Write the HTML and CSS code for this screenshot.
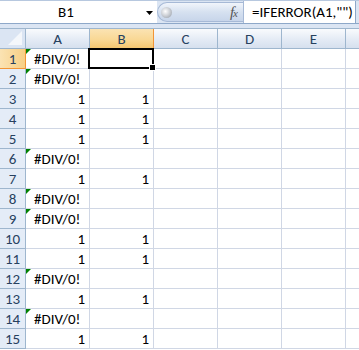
FILE: index.html
```html
<!DOCTYPE html>
<html>
<head>
<meta charset="utf-8">
<link rel="stylesheet" href="styles.css">
</head>
<body>
<div class="app">
  <div class="fbar">
    <div class="namebox">
      <span class="name">B1</span>
      <svg class="arrow" width="7" height="4" viewBox="0 0 7 4"><path d="M0 0H7L3.5 4Z" fill="#000"/></svg>
    </div>
    <div class="pill">
      <span class="ball"></span>
      <span class="fx">f<span class="x">x</span></span>
    </div>
    <div class="formula">=IFERROR(A1,"")</div>
    <div class="fend"></div>
  </div>
  <div class="strip"></div>
  <div class="sheet">
    <div class="corner"><span class="tri"></span></div>
    <div class="ch">A</div>
    <div class="ch sel">B</div>
    <div class="ch">C</div>
    <div class="ch">D</div>
    <div class="ch">E</div>
    <div class="ch last"></div>

    <div class="rh sel">1</div><div class="c err">#DIV/0!</div><div class="c"></div><div class="c"></div><div class="c"></div><div class="c"></div><div class="c last"></div>
    <div class="rh">2</div><div class="c err">#DIV/0!</div><div class="c"></div><div class="c"></div><div class="c"></div><div class="c"></div><div class="c last"></div>
    <div class="rh">3</div><div class="c num">1</div><div class="c num">1</div><div class="c"></div><div class="c"></div><div class="c"></div><div class="c last"></div>
    <div class="rh">4</div><div class="c num">1</div><div class="c num">1</div><div class="c"></div><div class="c"></div><div class="c"></div><div class="c last"></div>
    <div class="rh">5</div><div class="c num">1</div><div class="c num">1</div><div class="c"></div><div class="c"></div><div class="c"></div><div class="c last"></div>
    <div class="rh">6</div><div class="c err">#DIV/0!</div><div class="c"></div><div class="c"></div><div class="c"></div><div class="c"></div><div class="c last"></div>
    <div class="rh">7</div><div class="c num">1</div><div class="c num">1</div><div class="c"></div><div class="c"></div><div class="c"></div><div class="c last"></div>
    <div class="rh">8</div><div class="c err">#DIV/0!</div><div class="c"></div><div class="c"></div><div class="c"></div><div class="c"></div><div class="c last"></div>
    <div class="rh">9</div><div class="c err">#DIV/0!</div><div class="c"></div><div class="c"></div><div class="c"></div><div class="c"></div><div class="c last"></div>
    <div class="rh">10</div><div class="c num">1</div><div class="c num">1</div><div class="c"></div><div class="c"></div><div class="c"></div><div class="c last"></div>
    <div class="rh">11</div><div class="c num">1</div><div class="c num">1</div><div class="c"></div><div class="c"></div><div class="c"></div><div class="c last"></div>
    <div class="rh">12</div><div class="c err">#DIV/0!</div><div class="c"></div><div class="c"></div><div class="c"></div><div class="c"></div><div class="c last"></div>
    <div class="rh">13</div><div class="c num">1</div><div class="c num">1</div><div class="c"></div><div class="c"></div><div class="c"></div><div class="c last"></div>
    <div class="rh">14</div><div class="c err">#DIV/0!</div><div class="c"></div><div class="c"></div><div class="c"></div><div class="c"></div><div class="c last"></div>
    <div class="rh">15</div><div class="c num">1</div><div class="c num">1</div><div class="c"></div><div class="c"></div><div class="c"></div><div class="c last"></div>

    <div class="selection"><span class="handle"></span></div>
  </div>
</div>
</body>
</html>
```

FILE: styles.css
```css
html, body {
  margin: 0;
  padding: 0;
  background: #ffffff;
  overflow: hidden;
}
.app {
  width: 359px;
  height: 350px;
  font-family: Carlito, Lato, "Liberation Sans", sans-serif;
  font-size: 15px;
  color: #000;
  overflow: hidden;
}
.fbar {
  display: flex;
  height: 24px;
  box-sizing: border-box;
  border-top: 1px solid #b7c8df;
  border-bottom: 1px solid #8ea8c9;
  background: #dbe5f3;
}
.namebox {
  width: 157px;
  background: #fff;
  display: flex;
  align-items: center;
  position: relative;
}
.name {
  flex: 1;
  text-align: center;
  font-size: 15px;
  padding-right: 14px;
  color: #000;
}
.arrow {
  margin-right: 4px;
  margin-top: 2px;
}
.pill {
  width: 86px;
  margin-top: 1px;
  margin-bottom: 1px;
  box-sizing: border-box;
  border: 1px solid #a6b9d6;
  border-right: none;
  border-radius: 10px 0 0 10px;
  background: linear-gradient(#f1f5fb, #d6e1f0 50%, #c7d5ea);
  display: flex;
  align-items: center;
  justify-content: space-between;
  padding-left: 3px;
  padding-right: 6px;
}
.ball {
  width: 11px;
  height: 11px;
  border-radius: 50%;
  background: radial-gradient(circle at 40% 40%, #ffffff, #c9cdd3 50%, #8e959f);
}
.fx {
  font-family: "Liberation Serif", serif;
  font-style: italic;
  font-size: 15px;
  color: #555;
  letter-spacing: -1px;
}
.fx .x {
  font-size: 11px;
}
.formula {
  width: 112px;
  background: #fff;
  display: flex;
  align-items: center;
  padding-left: 8px;
  box-sizing: border-box;
  border-left: 1px solid #a6b9d6;
  font-size: 15px;
  white-space: nowrap;
  overflow: hidden;
}
.fend {
  flex: 1;
  border-left: 1px solid #8ea8c9;
  background: #dbe5f3;
}
.strip {
  height: 4px;
  background: #dbe5f3;
  border-bottom: 1px solid #9eb6ce;
}
.sheet {
  position: relative;
  display: grid;
  grid-template-columns: 26px repeat(5, 64px) 1fr;
  grid-template-rows: 20px repeat(15, 20px);
}
.corner {
  background: #dbe5f3;
  border-right: 1px solid #9eb6ce;
  border-bottom: 1px solid #9eb6ce;
  position: relative;
  box-sizing: border-box;
}
.tri {
  position: absolute;
  right: 3px;
  bottom: 3px;
  width: 0;
  height: 0;
  border-left: 14px solid transparent;
  border-bottom: 14px solid #f4f7fb;
}
.ch {
  box-sizing: border-box;
  border-right: 1px solid #9eb6ce;
  border-bottom: 1px solid #9eb6ce;
  background: linear-gradient(#f9fbfd, #e4ebf5 55%, #d6e0ee);
  color: #27415f;
  display: flex;
  align-items: center;
  justify-content: center;
  font-size: 15px;
}
.ch.sel {
  background: linear-gradient(#fbe3b3, #f9d895 55%, #f5c670);
  border-right-color: #f29536;
  border-bottom-color: #f29536;
}
.ch.last {
  border-right: none;
}
.rh {
  box-sizing: border-box;
  border-right: 1px solid #9eb6ce;
  border-bottom: 1px solid #9eb6ce;
  background: #e4ecf7;
  color: #27415f;
  display: flex;
  align-items: center;
  justify-content: center;
  font-size: 15px;
}
.rh.sel {
  background: linear-gradient(90deg, #fbe3b3, #f7cf85);
  border-bottom-color: #f29536;
  border-right-color: #f29536;
}
.c {
  box-sizing: border-box;
  border-right: 1px solid #d0d7e5;
  border-bottom: 1px solid #d0d7e5;
  display: flex;
  align-items: center;
  padding: 0 4px;
  white-space: nowrap;
  position: relative;
  font-size: 15px;
}
.c.last {
  border-right: none;
}
.c.num {
  justify-content: flex-end;
}
.c.err {
  padding-left: 8px;
}
.c.err::before {
  content: "";
  position: absolute;
  left: 0;
  top: 0;
  border-top: 5px solid #008000;
  border-right: 5px solid transparent;
}
.selection {
  position: absolute;
  left: 88px;
  top: 19px;
  width: 66px;
  height: 21px;
  box-sizing: border-box;
  border: 2px solid #000;
}
.handle {
  position: absolute;
  right: -4px;
  bottom: -4px;
  width: 5px;
  height: 5px;
  background: #000;
  border: 1px solid #fff;
}
```
